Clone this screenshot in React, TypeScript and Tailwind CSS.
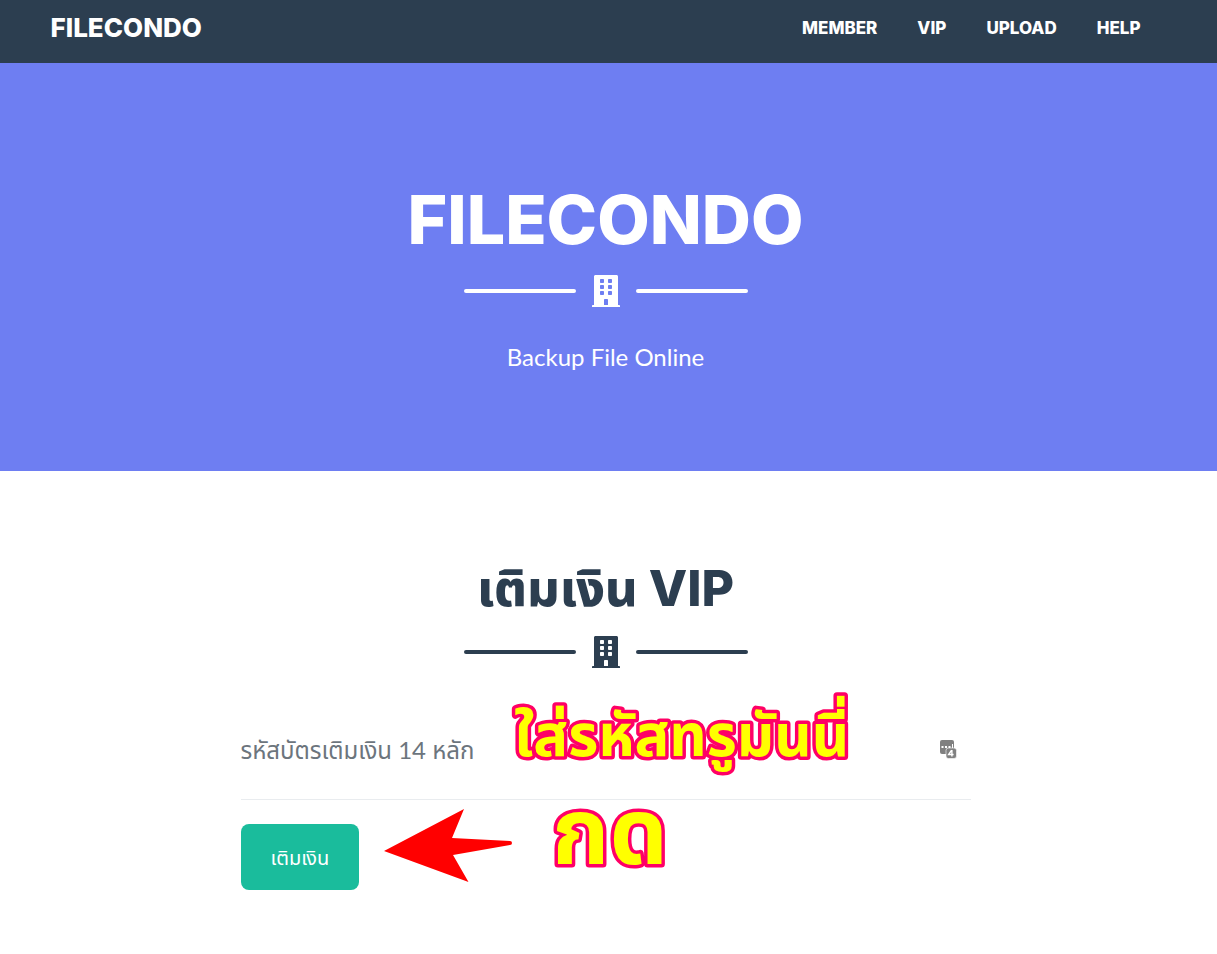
import { useState } from "react";
import { FaBuilding } from "react-icons/fa";

const NAV_LINKS = ["MEMBER", "VIP", "UPLOAD", "HELP"];

function Divider() {
  return (
    <div className="flex items-center justify-center gap-4">
      <span className="h-1 w-28 rounded-full bg-current" />
      <FaBuilding className="h-8 w-7" aria-hidden="true" />
      <span className="h-1 w-28 rounded-full bg-current" />
    </div>
  );
}

function Navbar() {
  return (
    <nav className="bg-[#2c3e50] pr-1.5 font-['Inter',sans-serif] text-white">
      <div className="mx-auto flex h-[63px] max-w-[1140px] items-start justify-between px-[15px] pt-2">
        <a href="#" className="text-[26px] leading-10 font-extrabold">FILECONDO</a>
        <ul className="flex gap-10 pr-5">
          {NAV_LINKS.map((link) => (
            <li key={link}>
              <a href={`#${link.toLowerCase()}`} className="block text-[17px] leading-10 font-extrabold">{link}</a>
            </li>
          ))}
        </ul>
      </div>
    </nav>
  );
}

function PasswordIcon() {
  return (
    <svg viewBox="0 0 17 19" className="h-[19px] w-[17px]" aria-hidden="true">
      <rect width="14" height="14" rx="2" fill="#808080" />
      <path d="M1.5 6h2v2h-2zM5 6h2v2H5zM8.5 6h2v2h-2zM12 4h1v4h-1z" fill="#fff" />
      <rect x="6" y="8" width="10.5" height="10.5" rx="2.5" fill="#808080" stroke="#fff" strokeWidth="0.6" />
      <path d="M11.6 10.2 8.6 14.5h5M11.9 10v6.5" fill="none" stroke="#fff" strokeWidth="1.4" />
    </svg>
  );
}

export default function App() {
  const [code, setCode] = useState("");

  return (
    <div className="min-h-screen bg-white font-['Lato','Noto_Sans_Thai',sans-serif] text-[#2c3e50]">
      <Navbar />

      <header className="bg-[#6e7ef2] pt-[124px] pr-1.5 pb-24 text-center text-white">
        <h1 className="mb-6 font-['Inter',sans-serif] text-[68px] leading-[64px] font-extrabold">FILECONDO</h1>
        <Divider />
        <p className="mt-8 text-2xl leading-9">Backup File Online</p>
      </header>

      <section className="pt-[89px] pr-1.5 pb-16">
        <h2 className="mb-5 text-center font-['Inter','Noto_Sans_Thai',sans-serif] text-[50px] leading-[56px] font-extrabold">
          เติมเงิน VIP
        </h2>
        <Divider />

        <form className="relative mx-auto mt-8 max-w-[730px]" onSubmit={(e) => e.preventDefault()}>
          <div className="flex h-[100px] items-center border-b border-[#e9ecef] pr-[14px]">
            <input
              type="text"
              aria-label="รหัสบัตรเติมเงิน 14 หลัก"
              placeholder="รหัสบัตรเติมเงิน 14 หลัก"
              value={code}
              onChange={(e) => setCode(e.target.value)}
              className="h-16 min-w-0 flex-1 text-2xl outline-none placeholder:text-[#6c757d]"
            />
            <PasswordIcon />
          </div>
          <button type="submit" className="mt-6 h-[66px] rounded-lg bg-[#1abc9c] px-[30px] text-xl text-white">
            เติมเงิน
          </button>

          {/* Hints and arrow over the form */}
          <svg viewBox="0 0 730 190" className="pointer-events-none absolute top-0 left-0 h-[190px] w-[730px] overflow-visible">
            <g fill="#ff0" stroke="#f06" strokeWidth="7" strokeLinejoin="round" paintOrder="stroke" fontWeight="700">
              <text x="273" y="56" fontSize="58">ใส่รหัสทรูมันนี่</text>
              <text x="311" y="164" fontSize="92">กด</text>
            </g>
            <path d="M143 151 223 109 211 138l58 3q2 0 2 2t-2 2L212 155l15.500 27Z" fill="#f00" />
          </svg>
        </form>
      </section>
    </div>
  );
}
